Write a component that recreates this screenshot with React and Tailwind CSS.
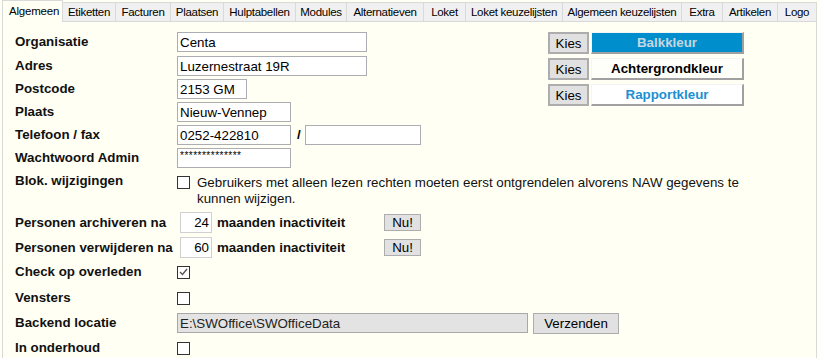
import { useState } from "react";

const tabs = [
  { label: "Algemeen", w: "w-[61px]" },
  { label: "Etiketten", w: "w-[53px]" },
  { label: "Facturen", w: "w-[55px]" },
  { label: "Plaatsen", w: "w-[53px]" },
  { label: "Hulptabellen", w: "w-[72px]" },
  { label: "Modules", w: "w-[51px]" },
  { label: "Alternatieven", w: "w-[77px]" },
  { label: "Loket", w: "w-[42px]" },
  { label: "Loket keuzelijsten", w: "w-[97px]" },
  { label: "Algemeen keuzelijsten", w: "w-[119px]" },
  { label: "Extra", w: "w-[41px]" },
  { label: "Artikelen", w: "w-[55px]" },
  { label: "Logo", w: "w-[39px]" },
];

function Checkbox({ checked }) {
  return (
    <span className="w-[13px] h-[13px] shrink-0 border border-[#333] bg-white flex items-center justify-center">
      {checked && (
        <svg width="9" height="8" viewBox="0 0 9 8">
          <path d="M1 4 L3.5 6.5 L8 1" fill="none" stroke="#555" strokeWidth="1.4" />
        </svg>
      )}
    </span>
  );
}

function Field({ value, w, small }) {
  return (
    <input
      readOnly
      value={value}
      className={`${w} h-[20px] border border-[#abadb3] bg-white px-[2px] outline-none text-black ${
        small ? "text-[10px] pb-[6px] tracking-[0.5px]" : "text-[13.33px]"
      }`}
    />
  );
}

function Label({ children, w = "w-[162px]" }) {
  return <span className={`${w} shrink-0 font-bold text-[13.33px] text-[#111]`}>{children}</span>;
}

function Row({ label, children, className = "" }) {
  return (
    <div className={`flex items-center h-[20px] ${className}`}>
      <Label>{label}</Label>
      {children}
    </div>
  );
}

function ColorRow({ label, className }) {
  return (
    <div className="flex h-[22px]">
      <button className="w-[41px] h-[22px] bg-[#e1e1e1] border-2 border-[#adadad] text-[13.33px] text-black">
        Kies
      </button>
      <button
        className={`ml-[2px] w-[153px] h-[22px] border-t border-l border-t-[#f4f4f4] border-l-[#f4f4f4] border-b-2 border-r-2 border-b-[#a0a0a0] border-r-[#a0a0a0] font-bold text-[13.33px] ${className}`}
      >
        {label}
      </button>
    </div>
  );
}

function PeriodRow({ label, value, className = "" }) {
  return (
    <div className={`flex items-center h-[21px] ${className}`}>
      <Label w="w-[165px]">{label}</Label>
      <input
        readOnly
        value={value}
        className="w-[32px] h-[21px] border border-[#d0d0d0] bg-white text-right pr-[2px] text-[13.33px] outline-none text-black"
      />
      <span className="ml-[5px] w-[167px] font-bold text-[13.33px] text-[#111]">maanden inactiviteit</span>
      <button className="w-[37px] h-[17px] bg-[#e1e1e1] border border-[#adadad] text-[13.33px] leading-none text-black">
        Nu!
      </button>
    </div>
  );
}

export default function App() {
  const [active] = useState(0);

  return (
    <div className="w-[819px] h-[358px] overflow-hidden bg-[#fffff4] font-['Liberation_Sans',Arial,sans-serif] text-black">
      {/* Tabbladen */}
      <div className="flex items-end h-[22px] pl-[2px]">
        {tabs.map((t, i) =>
          i === active ? (
            <div
              key={t.label}
              className={`${t.w} h-[22px] border-l border-t border-r border-[#d9d9d9] bg-[#fffff4] text-[11.5px] pl-[6px] pt-[2px] leading-[16px] tracking-[-0.2px]`}
            >
              {t.label}
            </div>
          ) : (
            <div
              key={t.label}
              className={`${t.w} h-[20px] border-t border-r border-b border-[#d9d9d9] bg-[#f0f0f0] text-[11.5px] text-center leading-[18px] tracking-[-0.3px]`}
            >
              {t.label}
            </div>
          )
        )}
      </div>

      {/* Paneel */}
      <div className="ml-[2px] w-[815px] h-[336px] border-l border-r border-[#d9d9d9] pl-[12px] pt-[10px]">
        <div className="flex">
          <div className="w-[533px]">
            <Row label="Organisatie" className="mb-[4px]">
              <Field value="Centa" w="w-[190px]" />
            </Row>
            <Row label="Adres" className="mb-[3px]">
              <Field value="Luzernestraat 19R" w="w-[190px]" />
            </Row>
            <Row label="Postcode" className="mb-[3px]">
              <Field value="2153 GM" w="w-[70px]" />
            </Row>
            <Row label="Plaats" className="mb-[3px]">
              <Field value="Nieuw-Vennep" w="w-[114px]" />
            </Row>
            <Row label="Telefoon / fax" className="mb-[3px]">
              <Field value="0252-422810" w="w-[114px]" />
              <span className="w-[14px] pl-[6px] font-bold text-[13.33px]">/</span>
              <Field value="" w="w-[116px]" />
            </Row>
            <Row label="Wachtwoord Admin">
              <Field value="**************" w="w-[114px]" small />
            </Row>
          </div>
          <div className="flex flex-col gap-[4px]">
            <ColorRow label="Balkkleur" className="bg-[#008fcc] text-[#c6d6e2]" />
            <ColorRow label="Achtergrondkleur" className="bg-[#fffffa] text-black" />
            <ColorRow label="Rapportkleur" className="bg-white text-[#2090d0]" />
          </div>
        </div>

        <div className="flex items-start h-[36px] mt-[5px]">
          <span className="w-[162px] shrink-0 font-bold text-[13.33px] text-[#111] leading-[16px]">
            Blok. wijzigingen
          </span>
          <span className="mt-[3px]">
            <Checkbox />
          </span>
          <p className="ml-[7px] text-[13.33px] leading-[16px] pt-[2px] text-[#111]">
            Gebruikers met alleen lezen rechten moeten eerst ontgrendelen alvorens NAW gegevens te
            <br />
            kunnen wijzigen.
          </p>
        </div>

        <PeriodRow label="Personen archiveren na" value="24" className="mt-[3px]" />
        <PeriodRow label="Personen verwijderen na" value="60" className="mt-[4px]" />

        <Row label="Check op overleden" className="mt-[4px]">
          <Checkbox checked />
        </Row>
        <Row label="Vensters" className="mt-[6px]">
          <Checkbox />
        </Row>
        <Row label="Backend locatie" className="mt-[5px]">
          <input
            readOnly
            value="E:\SWOffice\SWOfficeData"
            className="w-[351px] h-[20px] border border-[#a8a8a8] bg-[#e3e3e3] px-[2px] text-[13.33px] outline-none text-[#222]"
          />
          <button className="ml-[5px] w-[86px] h-[21px] bg-[#e1e1e1] border border-[#adadad] text-[13.33px] text-black">
            Verzenden
          </button>
        </Row>
        <Row label="In onderhoud" className="mt-[5px]">
          <Checkbox />
        </Row>
      </div>
    </div>
  );
}
